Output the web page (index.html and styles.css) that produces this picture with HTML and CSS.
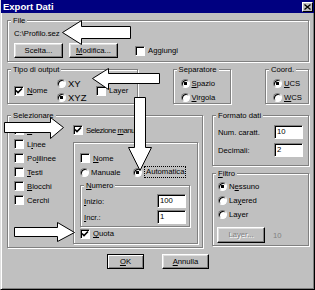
FILE: index.html
```html
<!DOCTYPE html>
<html lang="it">
<head>
    <meta charset="UTF-8">
    <title>Export Dati</title>
    <link rel="stylesheet" href="styles.css">
</head>
<body>
    <div class="window">
        <div class="titlebar">
            <span class="title">Export Dati</span>
            <span class="close"><svg width="7" height="6" viewBox="0 0 7 6"><path d="M0.5 0.5l6 5M6.5 0.5l-6 5" stroke="#000" stroke-width="1.3"/></svg></span>
        </div>
        <div class="content">
            <div class="group file">
                <span class="legend">File</span>
                <div class="path">C:\Profilo.sez</div>
                <div class="file-row">
                    <button class="btn">Scelta...</button>
                    <button class="btn btn-mod"><u>M</u>odifica...</button>
                    <label class="check aggiungi"><span class="box"></span><span>Aggiungi</span></label>
                </div>
            </div>

            <div class="row-b">
                <div class="group tipo">
                    <span class="legend">Tipo di output</span>
                    <div class="tipo-body">
                        <label class="check nome"><span class="box"><svg width="8" height="8" viewBox="0 0 8 8"><path d="M1 3.5l2 2 4-4" stroke="#000" stroke-width="1.6" fill="none"/></svg></span><span><u>N</u>ome</span></label>
                        <div class="radio-col">
                            <label class="opt big"><span class="radio"></span><span>XY</span></label>
                            <label class="opt big"><span class="radio on"></span><span>XYZ</span></label>
                        </div>
                        <label class="check"><span class="box"></span><span>Layer</span></label>
                    </div>
                </div>
                <div class="group sep">
                    <span class="legend">Separatore</span>
                    <div class="radio-list">
                        <label class="opt"><span class="radio on"></span><span><u>S</u>pazio</span></label>
                        <label class="opt"><span class="radio"></span><span><u>V</u>irgola</span></label>
                    </div>
                </div>
                <div class="group coord">
                    <span class="legend">Coord.</span>
                    <div class="radio-list">
                        <label class="opt"><span class="radio on"></span><span><u>U</u>CS</span></label>
                        <label class="opt"><span class="radio"></span><span><u>W</u>CS</span></label>
                    </div>
                </div>
            </div>

            <div class="row-c">
                <div class="group sel">
                    <span class="legend">Selezionare</span>
                    <div class="sel-body">
                        <div class="sel-left">
                            <label class="check row"><span class="box"></span><span><u>P</u>unti</span></label>
                            <label class="check row"><span class="box"></span><span>L<u>i</u>nee</span></label>
                            <label class="check row"><span class="box"></span><span>Po<u>l</u>ilinee</span></label>
                            <label class="check row"><span class="box"></span><span><u>T</u>esti</span></label>
                            <label class="check row"><span class="box"></span><span><u>B</u>locchi</span></label>
                            <label class="check row"><span class="box"></span><span>Cerchi</span></label>
                        </div>
                        <div class="sel-right">
                            <label class="check row"><span class="box"><svg width="8" height="8" viewBox="0 0 8 8"><path d="M1 3.5l2 2 4-4" stroke="#000" stroke-width="1.6" fill="none"/></svg></span><span class="tight">Selezione <u>m</u>anuale</span></label>
                            <div class="group inner">
                                <div class="inner-body">
                                    <label class="check row"><span class="box"></span><span><u>N</u>ome</span></label>
                                    <div class="mode">
                                        <label class="opt manuale"><span class="radio"></span><span>Manuale</span></label>
                                        <label class="opt"><span class="radio on"></span><span class="focus">Automatica</span></label>
                                    </div>
                                    <div class="group numero">
                                        <span class="legend"><u>N</u>umero</span>
                                        <div class="num-row first"><span><u>I</u>nizio:</span><span class="field">100</span></div>
                                        <div class="num-row"><span><u>I</u>ncr.:</span><span class="field">1</span></div>
                                    </div>
                                    <label class="check quota"><span class="box"><svg width="8" height="8" viewBox="0 0 8 8"><path d="M1 3.5l2 2 4-4" stroke="#000" stroke-width="1.6" fill="none"/></svg></span><span><u>Q</u>uota</span></label>
                                </div>
                            </div>
                        </div>
                    </div>
                </div>
                <div class="side">
                    <div class="group formato">
                        <span class="legend">Formato dati</span>
                        <div class="form-row first"><span>Num. caratt.</span><span class="field">10</span></div>
                        <div class="form-row"><span>Decimali:</span><span class="field">2</span></div>
                    </div>
                    <div class="group filtro">
                        <span class="legend"><u>F</u>iltro</span>
                        <div class="radio-list filtro-list">
                            <label class="opt"><span class="radio on"></span><span>N<u>e</u>ssuno</span></label>
                            <label class="opt"><span class="radio"></span><span>La<u>y</u>ered</span></label>
                            <label class="opt"><span class="radio"></span><span>Layer</span></label>
                        </div>
                        <div class="layer-row">
                            <button class="btn btn-layer" disabled>Layer...</button>
                            <span class="count">10</span>
                        </div>
                    </div>
                </div>
            </div>

            <div class="actions">
                <button class="btn btn-ok"><u>O</u>K</button>
                <button class="btn btn-annulla"><u>A</u>nnulla</button>
            </div>
        </div>
    </div>

    <svg class="arrows" width="315" height="290" viewBox="0 0 315 290">
        <g fill="#fff" stroke="#000" stroke-width="1" transform="translate(0.5 0.5)">
            <polygon points="62,32 81,20 81,26 130,26 130,38 81,38 81,44"/>
            <polygon points="92,78 108,68 108,73 159,73 159,83 108,83 108,89"/>
            <polygon points="134,97 145,97 145,147 151,147 139.5,170 128,147 134,147"/>
            <polygon points="4,122 50,122 50,117 63,127 50,138 50,132 4,132"/>
            <polygon points="14,227 57,227 57,222 74,232 57,241 57,236 14,236"/>
        </g>
    </svg>
</body>
</html>
```

FILE: styles.css
```css
body{margin:0;position:relative;background:#c0c0c0;font-family:"Liberation Sans",Arial,sans-serif;font-size:7.7px;color:#000;}
u{text-decoration:underline;}

.window{width:315px;height:290px;box-sizing:border-box;background:#c0c0c0;border-left:1px solid #dfdfdf;border-right:1px solid #000;border-bottom:1px solid #000;box-shadow:inset 1px 0 #fff,inset -1px -1px #808080;}
.titlebar{height:13px;background:#000080;display:flex;justify-content:space-between;padding:0 1px 0 2px;}
.title{color:#fff;font-weight:bold;font-size:9.5px;line-height:13px;}
.close{width:11px;height:10px;margin-top:2px;box-sizing:border-box;background:#c0c0c0;border:1px solid;border-color:#fff #000 #000 #fff;display:flex;align-items:center;justify-content:center;}
.close svg{display:block;}

.content{padding-left:6px;}

/* group boxes */
.group{box-sizing:border-box;border:1px solid #808080;box-shadow:1px 1px 0 #fff,inset 1px 1px 0 #fff;}
.legend{display:block;width:max-content;margin:-5px 0 0 3px;padding:0 2px;line-height:9px;background:#c0c0c0;}

/* controls */
.btn{box-sizing:border-box;height:15px;width:49px;padding:0;background:#c0c0c0;border:1px solid;border-color:#fff #000 #000 #fff;box-shadow:inset -1px -1px #808080,inset 1px 1px #dfdfdf;font:inherit;font-size:7.7px;line-height:12px;color:#000;}
.check,.opt{display:flex;align-items:center;white-space:nowrap;}
.check{gap:3px;}
.opt{gap:2px;height:13px;}
.box{width:10px;height:10px;flex:none;box-sizing:border-box;background:#fff;border:1px solid;border-color:#808080 #fff #fff #808080;box-shadow:inset 1px 1px #000;display:flex;align-items:center;justify-content:center;}
.box svg{display:block;}
.radio{width:9px;height:9px;flex:none;box-sizing:border-box;border-radius:50%;background:#fff;border:1px solid;border-color:#808080 #fff #fff #808080;box-shadow:inset 1px 1px #000;}
.radio.on{background:radial-gradient(circle,#000 1.4px,#fff 1.9px);}
.field{width:29px;height:14px;box-sizing:border-box;background:#fff;border:1px solid;border-color:#808080 #fff #fff #808080;box-shadow:inset 1px 1px #000;padding:0 2px;line-height:12px;}

/* file */
.file{margin-top:7px;width:302px;height:42px;}
.path{margin:4px 0 0 6px;line-height:10px;}
.file-row{display:flex;align-items:center;margin:4px 0 0 6px;}
.btn-mod{margin-left:6px;}
.aggiungi{margin-left:17px;}

/* second row */
.row-b{display:flex;justify-content:space-between;width:302px;margin-top:7px;}
.row-b .group{height:35px;}
.tipo{width:131px;}
.sep{width:58px;}
.coord{width:44px;}
.tipo-body{display:flex;align-items:center;padding-left:6px;margin-top:3px;}
.nome{width:43px;}
.radio-col{display:flex;flex-direction:column;gap:1px;width:39px;}
.big{font-size:9.5px;}
.radio-list{display:flex;flex-direction:column;gap:1px;margin:3px 0 0 7px;}

/* third row */
.row-c{display:flex;gap:9px;margin-top:11px;}
.sel{width:196px;height:133px;}
.sel-body{display:flex;margin-top:3px;padding-left:6px;}
.sel-left{width:59px;display:flex;flex-direction:column;}
.sel-right{width:125px;}
.row{height:14px;}
.tight{letter-spacing:-0.45px;}
.inner{margin-top:5px;width:125px;height:102px;}
.inner-body{padding:8px 0 0 6px;}
.mode{display:flex;align-items:center;height:14px;}
.manuale{width:53px;}
.focus{border:1px dotted #000;padding:0 1px;line-height:10px;}
.numero{margin-top:6px;width:110px;height:42px;}
.num-row{display:flex;justify-content:space-between;align-items:center;height:14px;padding:0 3px;margin-top:2px;}
.num-row.first{margin-top:4px;}
.quota{height:13px;}

.side{width:97px;display:flex;flex-direction:column;gap:7px;}
.formato{height:51px;}
.form-row{display:flex;justify-content:space-between;align-items:center;height:14px;padding:0 5px;margin-top:4px;}
.form-row.first{margin-top:5px;}
.filtro{height:73px;}
.filtro-list{gap:1px;margin:2px 0 0 5px;}
.filtro-list .opt{height:13px;}
.layer-row{display:flex;align-items:center;margin:6px 0 0 4px;}
.btn-layer{width:48px;height:16px;color:#808080;text-shadow:1px 1px #fff;}
.count{margin-left:8px;color:#808080;}

/* buttons */
.actions{display:flex;gap:18px;margin-top:6px;padding-left:100px;}
.btn-ok{width:37px;border:1px solid #000;box-shadow:inset 1px 1px #fff,inset -1px -1px #808080;}
.btn-annulla{width:47px;}

.arrows{position:absolute;left:0;top:0;pointer-events:none;}
```
